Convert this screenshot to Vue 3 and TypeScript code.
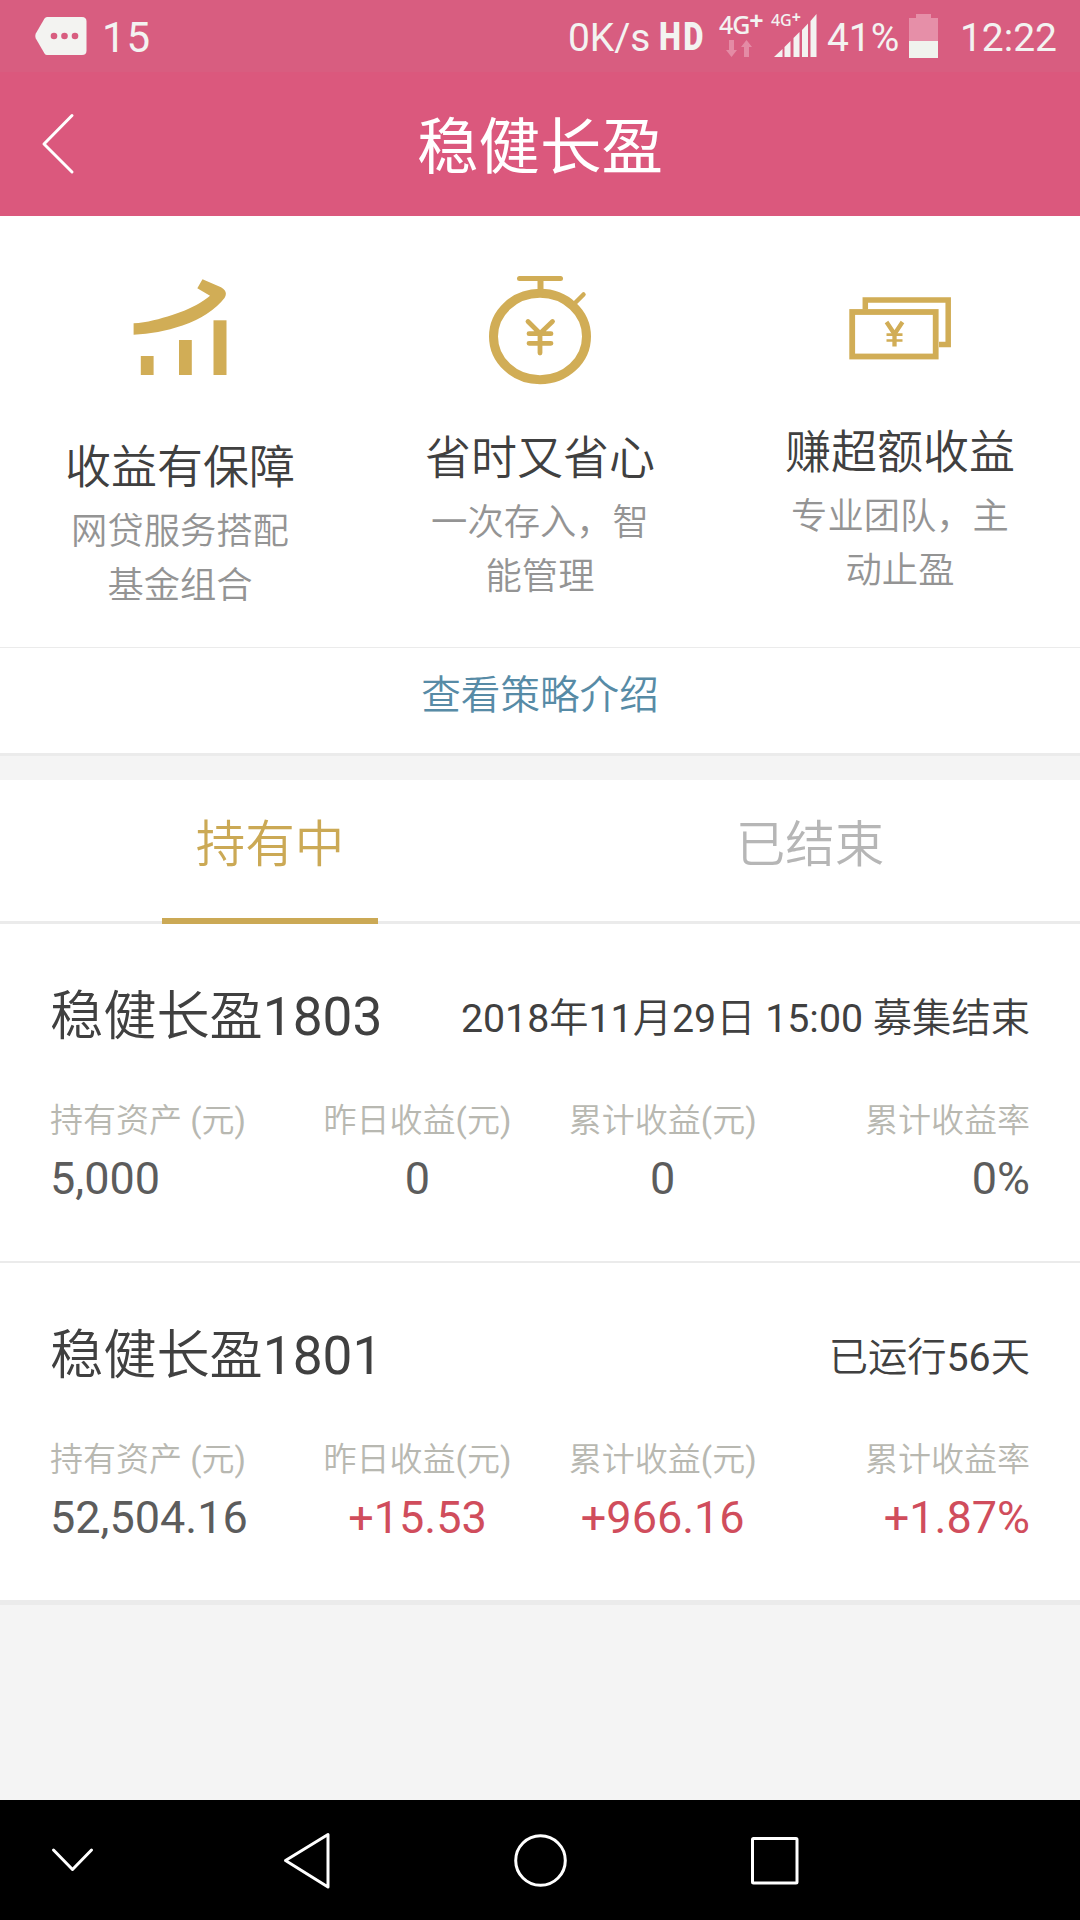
<script setup lang="ts">
import { ref } from 'vue'

interface Feature {
  icon: 'growth' | 'timer' | 'cash'
  title: string
  lines: string[]
}

interface Metric {
  label: string
  value: string
  gain?: boolean
}

interface Product {
  name: string
  status: string
  metrics: Metric[]
}

const features: Feature[] = [
  { icon: 'growth', title: '收益有保障', lines: ['网贷服务搭配', '基金组合'] },
  { icon: 'timer', title: '省时又省心', lines: ['一次存入，智', '能管理'] },
  { icon: 'cash', title: '赚超额收益', lines: ['专业团队，主', '动止盈'] },
]

const tabs: string[] = ['持有中', '已结束']
const activeTab = ref<number>(0)

const products: Product[] = [
  {
    name: '稳健长盈1803',
    status: '2018年11月29日 15:00 募集结束',
    metrics: [
      { label: '持有资产 (元)', value: '5,000' },
      { label: '昨日收益(元)', value: '0' },
      { label: '累计收益(元)', value: '0' },
      { label: '累计收益率', value: '0%' },
    ],
  },
  {
    name: '稳健长盈1801',
    status: '已运行56天',
    metrics: [
      { label: '持有资产 (元)', value: '52,504.16' },
      { label: '昨日收益(元)', value: '+15.53', gain: true },
      { label: '累计收益(元)', value: '+966.16', gain: true },
      { label: '累计收益率', value: '+1.87%', gain: true },
    ],
  },
]
</script>

<template>
  <div class="screen">
    <div class="status-bar">
      <div class="status-left">
        <svg class="msg-icon" width="52" height="38" viewBox="0 0 52 38">
          <path d="M12 0H47Q51.500 0 51.500 4.500V33.500Q51.500 38 47 38H12Q10.500 38 9.500 36.500L.8 21.500Q-.2 19 .8 16.500L9.500 1.500Q10.500 0 12 0Z" fill="#f3f3f1" />
          <circle cx="19" cy="19" r="3.300" fill="#d85d80" />
          <circle cx="29.500" cy="19" r="3.300" fill="#d85d80" />
          <circle cx="40" cy="19" r="3.300" fill="#d85d80" />
        </svg>
        <span class="msg-count">15</span>
      </div>
      <div class="status-right">
        <span class="speed">0K/s</span>
        <span class="hd">HD</span>
        <div class="network">
          <span class="net-type">4G<b>+</b></span>
          <svg class="net-arrows" width="26" height="18" viewBox="0 0 26 18" fill="#e48ba5">
            <path d="M3 0H8V10H11L5.500 17L0 10H3Z" />
            <path d="M18 17H23V7H26L20.500 0L15 7H18Z" />
          </svg>
        </div>
        <div class="signal">
          <svg width="43" height="43" viewBox="0 0 43 43" fill="#f3f3f1">
            <path d="M0 43L8.500 35V43Z" />
            <path d="M10.500 33L16.500 27V43H10.500Z" />
            <path d="M19.500 24L25.500 18V43H19.500Z" />
            <path d="M28 16L34 9.500V43H28Z" />
            <path d="M36.500 7L42.500 0V43H36.500Z" />
          </svg>
          <span class="net-small">4G<b>+</b></span>
        </div>
        <span class="percent">41%</span>
        <svg class="battery" width="30" height="44" viewBox="0 0 30 44">
          <path d="M7 0H22V4H29V27H0V4H7Z" fill="#e68fa8" />
          <path d="M0 27H29V44H0Z" fill="#f0f3ee" />
        </svg>
        <span class="clock">12:22</span>
      </div>
    </div>

    <header class="header">
      <svg class="back" width="34" height="62" viewBox="0 0 34 62">
        <path d="M31 2.500L3 31L31 59" fill="none" stroke="#fff" stroke-width="3" stroke-linecap="round" stroke-linejoin="round" />
      </svg>
      <h1>稳健长盈</h1>
    </header>

    <section class="features">
      <div v-for="f in features" :key="f.icon" class="feature">
        <div class="feature-icon" :class="f.icon">
          <svg v-if="f.icon === 'growth'" width="94" height="98" viewBox="0 0 94 98" fill="#d1ad56">
            <path d="M.6 45.300C14 44.500 27 41 39.200 37C48 34 56 31 63.300 27Q72 22 77 17.700L64.300 10.300L69.500 1.300L88 9.200Q95.500 13.500 91.500 20Q85 28.500 73.600 36Q63 43 49.500 47.500C33 53 17 56 .6 56.700Z" />
            <rect x="7.800" y="78" width="12.800" height="19" />
            <rect x="46" y="62" width="12.800" height="35" />
            <rect x="80.500" y="42.300" width="13" height="54.700" />
          </svg>
          <svg v-else-if="f.icon === 'timer'" width="104" height="110" viewBox="0 0 104 110" fill="none" stroke="#d1ad56" stroke-linecap="round">
            <ellipse cx="52" cy="61.500" rx="46.500" ry="43.200" stroke-width="9" />
            <path d="M31.500 3.500H72.500" stroke-width="5" />
            <path d="M52.500 4V14" stroke-width="6" stroke-linecap="butt" />
            <path d="M86.500 28.500L95.500 19.500" stroke-width="4.500" />
            <path d="M40 46.500L52 58.500L64.500 46.500M41 58.700H63M41 68.300H63M52 59V78" stroke-width="4.800" />
          </svg>
          <svg v-else width="104" height="64" viewBox="0 0 104 64" fill="none" stroke="#d1ad56">
            <path d="M17.300 13.500V4H100.200V48.400H91" stroke-width="5.500" />
            <rect x="4.200" y="16" width="83.500" height="44.500" stroke-width="5.800" />
            <path d="M38.500 26L46.500 38L54.500 26M46.500 37V50.500" stroke-width="4.300" />
            <path d="M38.500 38.700H54.500M38.500 44.500H54.500" stroke-width="2.700" />
          </svg>
        </div>
        <h2>{{ f.title }}</h2>
        <p v-for="line in f.lines" :key="line">{{ line }}</p>
      </div>
    </section>

    <a class="strategy">查看策略介绍</a>

    <nav class="tabs">
      <div v-for="(t, i) in tabs" :key="t" class="tab" :class="{ active: i === activeTab }" @click="activeTab = i">
        <span>{{ t }}</span>
      </div>
    </nav>

    <section class="products">
      <article v-for="p in products" :key="p.name" class="product">
        <div class="product-head">
          <h3>{{ p.name }}</h3>
          <span>{{ p.status }}</span>
        </div>
        <div class="metrics">
          <div v-for="m in p.metrics" :key="m.label" class="metric">
            <span class="label">{{ m.label }}</span>
            <span class="value" :class="{ gain: m.gain }">{{ m.value }}</span>
          </div>
        </div>
      </article>
    </section>

    <footer class="nav-bar">
      <svg width="1080" height="120" viewBox="0 0 1080 120" fill="none" stroke="#fff" stroke-width="3" stroke-linecap="round" stroke-linejoin="round">
        <path d="M53.500 50L72.500 69.500L91.500 50" />
        <path d="M328 34.500V87L285.500 60.500Z" />
        <circle cx="540.500" cy="60.500" r="24.800" />
        <rect x="752.500" y="38.500" width="44.500" height="44.500" rx="1" />
      </svg>
    </footer>
  </div>
</template>

<style>
body {
  background: #f4f4f4;
}
</style>

<style scoped>
.screen {
  width: 1080px;
  height: 1920px;
  display: flex;
  flex-direction: column;
  overflow: hidden;
  background: #f4f4f4;
  font-family: Roboto, "Noto Sans CJK SC DemiLight", "Noto Sans CJK SC", sans-serif;
  color: #404040;
}

h1,
h2,
h3,
p {
  margin: 0;
  font-weight: 400;
}

svg {
  display: block;
  flex: none;
}

.status-bar {
  height: 72px;
  flex: none;
  display: flex;
  justify-content: space-between;
  background: #d85d80;
  color: #f3f3f1;
  white-space: nowrap;
}

.status-left {
  display: flex;
  padding-left: 35px;
}

.msg-icon {
  margin-top: 17px;
}

.msg-count {
  margin-left: 15px;
  font-size: 42px;
  line-height: 76px;
  letter-spacing: 1px;
}

.status-right {
  display: flex;
  padding-right: 23px;
  font-size: 39px;
  line-height: 76px;
}

.speed {
  width: 91px;
}

.hd {
  width: 60px;
  font-weight: 900;
  font-size: 38px;
  line-height: 74px;
  letter-spacing: 3px;
  transform: scaleX(0.82);
  transform-origin: 0 50%;
}

.network {
  width: 55px;
  padding-top: 12px;
}

.net-type {
  display: flex;
  font-family: "Noto Sans", sans-serif;
  font-size: 25px;
  font-weight: 500;
  line-height: 24px;
  letter-spacing: -1px;
}

.net-type b {
  margin-top: -4px;
}

.net-arrows {
  margin: 4px 0 0 7px;
}

.signal {
  position: relative;
  width: 53px;
  padding-top: 14px;
}

.net-small {
  position: absolute;
  left: -3px;
  top: 12px;
  display: flex;
  font-family: "Noto Sans", sans-serif;
  font-size: 16px;
  font-weight: 500;
  line-height: 16px;
}

.net-small b {
  margin-top: -3px;
}

.percent {
  width: 82px;
}

.battery {
  margin: 14px 21px 0 0;
}

.header {
  height: 144px;
  flex: none;
  display: grid;
  grid-template-columns: 120px 1fr 120px;
  align-items: center;
  background: #db587d;
  color: #fff;
}

.back {
  margin-left: 41px;
}

.header h1 {
  font-family: Roboto, "Noto Sans CJK SC", sans-serif;
  font-size: 61.500px;
  line-height: 80px;
  padding-top: 7px;
  text-align: center;
}

.features {
  height: 431px;
  flex: none;
  display: flex;
  background: #fff;
}

.feature {
  flex: 1;
  display: flex;
  flex-direction: column;
  align-items: center;
}

.feature-icon.growth {
  height: 159px;
  padding-top: 62px;
}

.feature-icon.timer {
  height: 153px;
  padding-top: 59px;
}

.feature-icon.cash {
  height: 126px;
  padding-top: 80px;
}

.feature h2 {
  font-size: 46px;
  line-height: 60px;
  margin-bottom: 8px;
}

.feature p {
  font-size: 36.300px;
  line-height: 54px;
  color: #949494;
}

.strategy {
  height: 109px;
  flex: none;
  box-sizing: border-box;
  border-top: 1px solid #ebebeb;
  border-bottom: 3px solid #ebebeb;
  background: #fff;
  color: #578ba6;
  font-size: 39.600px;
  line-height: 95px;
  text-align: center;
}

.tabs {
  height: 144px;
  flex: none;
  box-sizing: border-box;
  margin-top: 24px;
  display: flex;
  background: #fff;
  border-bottom: 3px solid #ebebeb;
}

.tab {
  flex: 1;
  display: flex;
  justify-content: center;
  font-size: 49.500px;
  line-height: 130px;
  color: #b6b6b6;
}

.tab span {
  width: 216px;
  height: 138px;
  text-align: center;
}

.tab.active span {
  color: #cba955;
  border-bottom: 6px solid #cba955;
}

.products {
  flex: none;
  background: #fff;
  border-bottom: 5px solid #ebebeb;
}

.product {
  box-sizing: border-box;
  height: 339px;
  padding: 58px 50px 0;
  border-bottom: 2px solid #ebebeb;
}

.product:last-child {
  height: 337px;
  border-bottom: 0;
}

.product-head {
  display: flex;
  justify-content: space-between;
}

.product-head h3 {
  font-size: 53.200px;
  line-height: 70px;
}

.product-head span {
  font-size: 39.300px;
  line-height: 74px;
}

.metrics {
  display: grid;
  grid-template-columns: 244.500px 246px 244.500px 245px;
  margin-top: 42px;
}

.metric {
  display: flex;
  flex-direction: column;
  align-items: center;
  white-space: nowrap;
}

.metric:first-child {
  align-items: flex-start;
}

.metric:last-child {
  align-items: flex-end;
}

.label {
  font-size: 33px;
  line-height: 46px;
  color: #b8b8b1;
}

.value {
  font-size: 45px;
  line-height: 60px;
  margin-top: 5px;
  color: #5c5c5c;
}

.value.gain {
  color: #d04d5c;
}

.nav-bar {
  height: 120px;
  flex: none;
  margin-top: auto;
  background: #000;
}
</style>
